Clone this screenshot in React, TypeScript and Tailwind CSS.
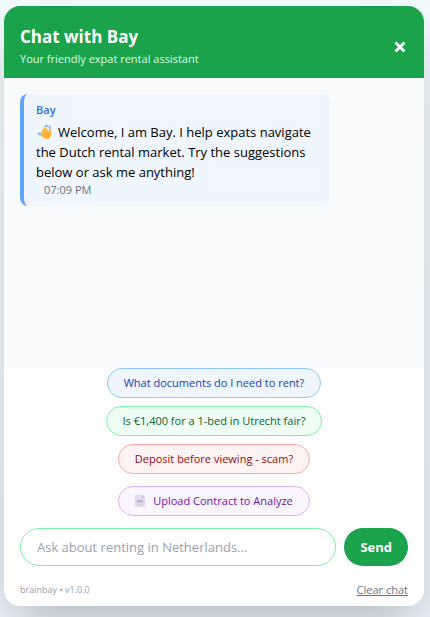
import { useState } from "react";

const suggestions = [
  {
    text: "What documents do I need to rent?",
    style: "border-[#8ec5ff] bg-[#eff6ff] text-[#193cb8]",
  },
  {
    text: "Is €1,400 for a 1-bed in Utrecht fair?",
    style: "border-[#7bf1a8] bg-[#f0fdf4] text-[#016630]",
  },
  {
    text: "Deposit before viewing - scam?",
    style: "border-[#ffa2a2] bg-[#fef2f2] text-[#9f0712]",
  },
];

function WaveIcon() {
  return (
    <svg viewBox="0 0 16 16" className="mr-1.5 inline-block size-4 align-[-3px]" aria-hidden="true">
      <path d="M2.500 9.500l2 1M9.500 2l1.500 0M13.500 2.500l.5 1.500" stroke="#7ab8e8" strokeWidth="2" strokeLinecap="round" fill="none" />
      <path d="M7 6l3.500 4M9 4.500l3 4M5.800 8.500l3.500 3.500M6 11l3 2M14 6v4" stroke="#fdb53c" strokeWidth="2.200" strokeLinecap="round" fill="none" />
      <path d="M7.500 9l4-2.500 3.600 1.500c.6 3-.1 7-4.100 7-2.500 0-4-1.500-4.500-3z" fill="#fdb53c" />
      <path d="M8.300 6.500l2.200 2.600M6.800 8.300l2.500 2.700M13 8.500c-1 .6-1.400 1.500-1.300 2.500" stroke="#ef9a2c" strokeWidth=".6" strokeLinecap="round" fill="none" />
    </svg>
  );
}

function PageIcon() {
  return (
    <svg viewBox="0 0 10 12" className="h-3 w-2.5" aria-hidden="true">
      <path d="M0 0h7l3 3v9H0z" fill="#e2d9ec" />
      <path d="M7 0l3 3H7z" fill="#c4b8d2" />
      <path d="M2 5h6v3H2z" fill="#c2bacd" />
      <path d="M2 9.500h6" stroke="#d6cde2" />
    </svg>
  );
}

export default function App() {
  const [message, setMessage] = useState("");

  return (
    <div className="flex min-h-screen flex-col bg-linear-to-b from-[#f0fafb] to-[#eaf1fa] pt-1.5 pr-1.5 pb-[11px] pl-1 font-['Open_Sans','Noto_Sans',sans-serif]">
      <main className="flex flex-1 flex-col overflow-hidden rounded-2xl bg-white shadow-2xl">
        <header className="flex items-center justify-between bg-[#1aa34a] px-4 pt-[17px] pb-[11px] text-white">
          <div>
            <h1 className="text-[17px] leading-7 font-bold">Chat with Bay</h1>
            <p className="text-[11px] leading-4 text-[#dcfce7]">Your friendly expat rental assistant</p>
          </div>
          <button type="button" aria-label="Close chat" className="mt-1 p-0.5">
            <svg viewBox="0 0 12 12" className="size-3" aria-hidden="true">
              <path d="M1.500 1.500l9 9M10.500 1.500l-9 9" stroke="currentColor" strokeWidth="2.800" />
            </svg>
          </button>
        </header>

        <section className="flex-1 bg-gray-50 p-4">
          <article className="w-4/5 rounded-lg border-l-4 border-[#60a5fa] bg-[#eff6ff] py-2 pr-2 pl-3">
            <h2 className="mb-1 text-[11px] leading-4 font-semibold text-[#2f6bed]">Bay</h2>
            <p className="text-[13px] leading-5 text-black">
              <WaveIcon />
              Welcome, I am Bay. I help expats navigate the Dutch rental market. Try the suggestions below or ask me anything!
            </p>
            <time className="ml-2 block text-[11px] leading-4 text-gray-500">07:09 PM</time>
          </article>
        </section>

        <div className="flex flex-col items-center gap-2 text-[11px] leading-4">
          {suggestions.map((item) => (
            <button key={item.text} type="button" className={`rounded-full border px-4 py-1.5 ${item.style}`}>
              {item.text}
            </button>
          ))}
          <button
            type="button"
            className="mt-1 flex items-center gap-2 rounded-full border border-[#dab2ff] bg-[#faf5ff] px-4 py-1.5 text-[#6e11b0]"
          >
            <PageIcon />
            Upload Contract to Analyze
          </button>
        </div>

        <form className="flex gap-2 px-4 pt-3" onSubmit={(event) => event.preventDefault()}>
          <input
            type="text"
            aria-label="Message"
            value={message}
            onChange={(event) => setMessage(event.target.value)}
            placeholder="Ask about renting in Netherlands..."
            className="min-w-0 flex-1 rounded-full border border-[#7bf1a8] px-4 py-2 text-[13px] leading-5 placeholder:text-gray-400"
          />
          <button type="submit" className="rounded-full bg-[#1aa34a] px-4 text-[13px] leading-5 font-bold text-white">
            Send
          </button>
        </form>

        <footer className="flex items-center justify-between px-4 pt-4 pb-2">
          <span className="text-[9px] leading-4 text-gray-400">brainbay • v1.0.0</span>
          <button type="button" className="text-[11px] leading-4 text-gray-500 underline">
            Clear chat
          </button>
        </footer>
      </main>
    </div>
  );
}
